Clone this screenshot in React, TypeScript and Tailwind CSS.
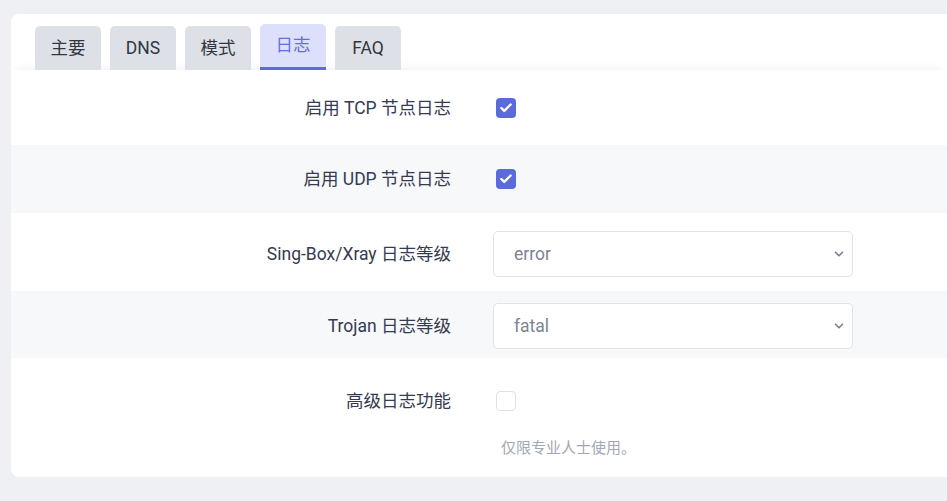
import { ChevronDown, Check } from "lucide-react"

const tabs = ["主要", "DNS", "模式", "日志", "FAQ"]

function Checkbox({ checked }: { checked?: boolean }) {
  return checked ? (
    <span className="flex h-5 w-5 items-center justify-center rounded-[4px] bg-[#5b6bd9]">
      <Check className="h-3.5 w-3.5 text-white" strokeWidth={4} />
    </span>
  ) : (
    <span className="block h-5 w-5 rounded-[4px] border border-[#dfe1e6] bg-white" />
  )
}

function Select({ value }: { value: string }) {
  return (
    <div className="flex h-[46px] w-[360px] items-center justify-between rounded-[5px] border border-[#e1e3e8] bg-white pl-5 pr-[6px] text-[17.5px] text-[#7c8494]">
      <span className="pt-[1px]">{value}</span>
      <ChevronDown className="h-[14px] w-[14px] text-[#7c8494]" strokeWidth={3} />
    </div>
  )
}

function Row({ label, gray, h, children }: { label: string; gray?: boolean; h: string; children: React.ReactNode }) {
  return (
    <div className={`flex items-center ${h} ${gray ? "bg-[#f7f8f9]" : "bg-white"}`}>
      <div className="w-[440px] pt-[1px] text-right text-[17.5px] text-[#363a52]">{label}</div>
      <div className="ml-[42px] flex items-center">{children}</div>
    </div>
  )
}

export default function App() {
  return (
    <div className="min-h-[501px] bg-[#eff0f3] pl-[11px] pt-[14px]" style={{ fontFamily: "Roboto, 'Noto Sans CJK SC', sans-serif" }}>
      <div className="h-[463px] overflow-hidden rounded-l-[8px] bg-white">
        <div className="flex items-end gap-[9px] px-[24px] pt-[10px]">
          {tabs.map((t) => {
            const active = t === "日志"
            return (
              <div
                key={t}
                className={`flex w-[66px] items-center justify-center rounded-t-[5px] text-[17.5px] ${
                  active
                    ? "h-[46px] border-b-[3px] border-[#5b6bd9] bg-[#dde0fb] text-[#6570d4]"
                    : "h-[44px] bg-[#dde1e7] text-[#33363f]"
                }`}
              >
                {t}
              </div>
            )
          })}
        </div>
        <div className="shadow-[0_-6px_10px_-6px_rgba(0,0,0,0.08)]">
          <Row label="启用 TCP 节点日志" h="h-[75px]">
            <span className="ml-[3px]"><Checkbox checked /></span>
          </Row>
          <Row label="启用 UDP 节点日志" h="h-[68px]" gray>
            <span className="ml-[3px]"><Checkbox checked /></span>
          </Row>
          <Row label="Sing-Box/Xray 日志等级" h="h-[78px] pt-[3px]">
            <Select value="error" />
          </Row>
          <Row label="Trojan 日志等级" h="h-[67px] pt-[2px]" gray>
            <Select value="fatal" />
          </Row>
          <div className="bg-white pt-[30px]">
            <div className="flex items-center">
              <div className="w-[440px] text-right text-[17.5px] text-[#363a52]">高级日志功能</div>
              <div className="ml-[45px]"><Checkbox /></div>
            </div>
            <div className="ml-[490px] mt-[23px] text-[15px] text-[#a3a8b4]">仅限专业人士使用。</div>
          </div>
        </div>
      </div>
    </div>
  )
}
